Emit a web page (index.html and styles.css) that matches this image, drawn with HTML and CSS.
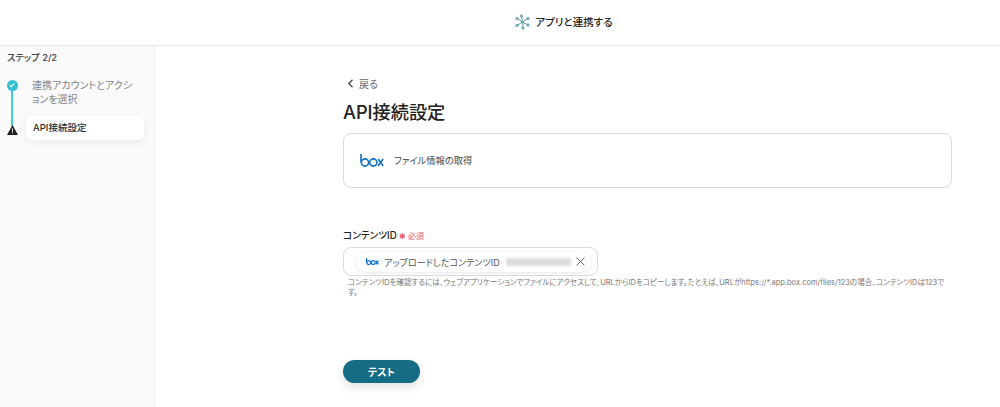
FILE: index.html
```html
<!DOCTYPE html>
<html lang="ja">
<head>
<meta charset="utf-8">
<title>アプリと連携する</title>
<link rel="stylesheet" href="styles.css">
</head>
<body>
<header class="topbar">
  <svg class="hub" width="15" height="16" viewBox="0 0 15 16" fill="none" stroke="#5d97a8" stroke-width="1">
    <path d="M7.500 8 6.500 2M7.500 8l5.500-3.500M7.500 8l5.500 3M7.500 8l.5 6M7.500 8 2 11.500M7.500 8 2 4.500"/>
    <g fill="#a5cbd8" stroke="#4f8ba0" stroke-width=".7"><circle cx="6.500" cy="2" r="1.200"/><circle cx="13" cy="4.500" r="1.200"/><circle cx="13" cy="11" r="1.200"/><circle cx="8" cy="14" r="1.200"/><circle cx="2" cy="11.500" r="1.200"/><circle cx="2" cy="4.500" r="1.200"/></g>
  </svg>
  <span class="topbar-title">アプリと連携する</span>
</header>
<div class="page">
  <aside class="sidebar">
    <div class="step-count">ステップ 2/2</div>
    <ol class="steps">
      <li class="step step-done">
        <span class="marker marker-done">
          <svg width="6" height="6" viewBox="0 0 6 6" fill="none" stroke="#fff" stroke-width="1.100"><path d="M.8 3.100 2.400 4.600 5.200 1.400"/></svg>
        </span>
        <span class="step-label">連携アカウントとアクションを選択</span>
      </li>
      <li class="step step-current">
        <svg class="marker-warn" width="11" height="10" viewBox="0 0 11 10"><path d="M5.500 0 11 10H0Z" fill="#1d1d1d"/><path d="M5 3.500h1v3.200H5zM5 7.500h1v1H5z" fill="#fff"/></svg>
        <span class="step-label step-card">API接続設定</span>
      </li>
    </ol>
  </aside>
  <main class="content">
    <a class="back">
      <svg width="7" height="9" viewBox="0 0 7 9" fill="none" stroke="#444" stroke-width="1.300"><path d="M5.500 .8 1.800 4.500 5.500 8.200"/></svg>
      <span>戻る</span>
    </a>
    <h1 class="title">API接続設定</h1>
    <section class="action-card">
      <svg class="box-large" role="img" aria-label="box" width="24" height="13" viewBox="0 0 24 13" fill="none" stroke="#0f6fc6" stroke-width="1.600"><path d="M1 0v8.500"/><circle cx="5" cy="8.500" r="3.600"/><circle cx="13.300" cy="8.500" r="3.600"/><path d="M18 5l5.200 7M23.200 5 18 12"/></svg>
      <span class="action-name">ファイル情報の取得</span>
    </section>
    <div class="field-label">
      <span class="label-text">コンテンツID</span>
      <span class="required">✱ 必須</span>
    </div>
    <div class="input">
      <div class="chip">
        <svg class="box-small" role="img" aria-label="box" width="13" height="7" viewBox="0 0 24 13" fill="none" stroke="#0f6fc6" stroke-width="2.200"><path d="M1 0v8.500"/><circle cx="5" cy="8.500" r="3.600"/><circle cx="13.300" cy="8.500" r="3.600"/><path d="M18 5l5.200 7M23.200 5 18 12"/></svg>
        <span class="chip-text">アップロードしたコンテンツID</span>
        <span class="blurred"></span>
        <svg class="chip-close" width="9" height="9" viewBox="0 0 9 9" fill="none" stroke="#666" stroke-width="1"><path d="M.5.5l8 8M8.500.5l-8 8"/></svg>
      </div>
    </div>
    <p class="help">コンテンツIDを確認するには、ウェブアプリケーションでファイルにアクセスして、URLからIDをコピーします。たとえば、URLがhttps://*.app.box.com/files/123の場合、コンテンツIDは123です。</p>
    <button class="test-button" type="button">テスト</button>
  </main>
</div>
</body>
</html>
```
FILE: styles.css
```css
* { box-sizing: border-box; }
html, body { height: 100%; }
body {
  margin: 0;
  background: #fff;
  color: #2b2b2b;
  font-family: "Inter", "Noto Sans CJK JP", "Noto Sans", sans-serif;
  font-feature-settings: "palt";
  overflow: hidden;
}
.topbar {
  height: 46px;
  display: flex;
  align-items: center;
  justify-content: center;
  gap: 5px;
  border-bottom: 1px solid #e8e8e8;
  padding-left: 128px;
  padding-bottom: 3px;
}
.topbar-title { font-size: 10.500px; font-weight: 500; color: #222; }
.hub { flex: none; margin-top: 1px; }
.page { display: flex; height: 361px; }
.sidebar {
  width: 155px;
  flex: none;
  background: #fafafa;
  border-right: 1px solid #f0f0f0;
  padding: 5px 10px 0 7px;
}
.step-count { font-size: 9.300px; font-weight: 500; color: #444; line-height: 14px; }
.steps { list-style: none; margin: 13px 0 0; padding: 0; position: relative; }
.step { display: flex; position: relative; }
.step-done { padding-left: 25px; min-height: 38px; }
.step-done::after {
  content: "";
  position: absolute;
  left: 4px;
  top: 8px;
  width: 2px;
  height: 40px;
  background: #3dd0dc;
}
.marker-done {
  position: absolute;
  left: 0;
  top: 2px;
  width: 10.500px;
  height: 10.500px;
  border-radius: 50%;
  background: #35c0d3;
  display: flex;
  align-items: center;
  justify-content: center;
  z-index: 1;
}
.step-done .step-label { font-size: 10px; line-height: 14px; color: #848484; width: 104px; }
.step-current { align-items: center; gap: 8px; }
.marker-warn { flex: none; position: relative; z-index: 1; margin-top: 3px; }
.step-card {
  width: 119px;
  height: 24px;
  background: #fff;
  border-radius: 6px;
  box-shadow: 0 2px 8px rgba(0,0,0,.07);
  font-size: 9.500px;
  font-weight: 500;
  color: #2b2b2b;
  line-height: 24px;
  padding-left: 7px;
}
.content {
  flex: none;
  width: 609px;
  margin-left: 188px;
  padding-top: 30px;
}
.back { display: flex; align-items: center; gap: 5px; height: 14px; padding-left: 4px; font-size: 10px; color: #666; }
.title { margin: 9px 0 0; font-size: 18.200px; line-height: 26px; font-weight: 500; color: #222; }
.action-card {
  margin-top: 8px;
  height: 55px;
  border: 1px solid #dcdcdc;
  border-radius: 8px;
  display: flex;
  align-items: center;
  padding-left: 16px;
  gap: 10px;
}
.box-large { flex: none; margin-top: -1px; }
.box-small { flex: none; }
.action-name { font-size: 9.300px; color: #444; margin-top: -1px; }
.field-label { margin-top: 39px; display: flex; align-items: center; gap: 2px; height: 16px; }
.label-text { font-size: 9.700px; font-weight: 500; color: #222; }
.required { font-size: 8px; color: #ee5a62; }
.input {
  margin-top: 4px;
  width: 255px;
  height: 29px;
  border: 1px solid #dcdcdc;
  border-radius: 8px;
  display: flex;
  align-items: center;
  padding-left: 12px;
}
.chip {
  width: 235px;
  height: 20px;
  border-radius: 10px;
  background: #fff;
  box-shadow: 0 1px 4px rgba(0,0,0,.1);
  display: flex;
  align-items: center;
  padding-left: 10px;
  gap: 5px;
}
.chip-text { font-size: 9.100px; color: #555; white-space: nowrap; }
.blurred {
  width: 65px;
  height: 8px;
  background: #dcdcdc;
  filter: blur(1.500px);
  margin-left: 1px;
}
.chip-close { flex: none; }
.help { margin: 2px 0 0; padding-left: 5px; font-size: 7.500px; line-height: 10px; color: #777; }
.test-button {
  display: block;
  margin-top: 62px;
  width: 77px;
  height: 23px;
  border: 0;
  border-radius: 12px;
  background: #176c85;
  color: #fff;
  font: 700 10px "Noto Sans CJK JP", sans-serif;
  font-feature-settings: "palt";
  box-shadow: 0 4px 10px rgba(0,0,0,.12);
}
```
